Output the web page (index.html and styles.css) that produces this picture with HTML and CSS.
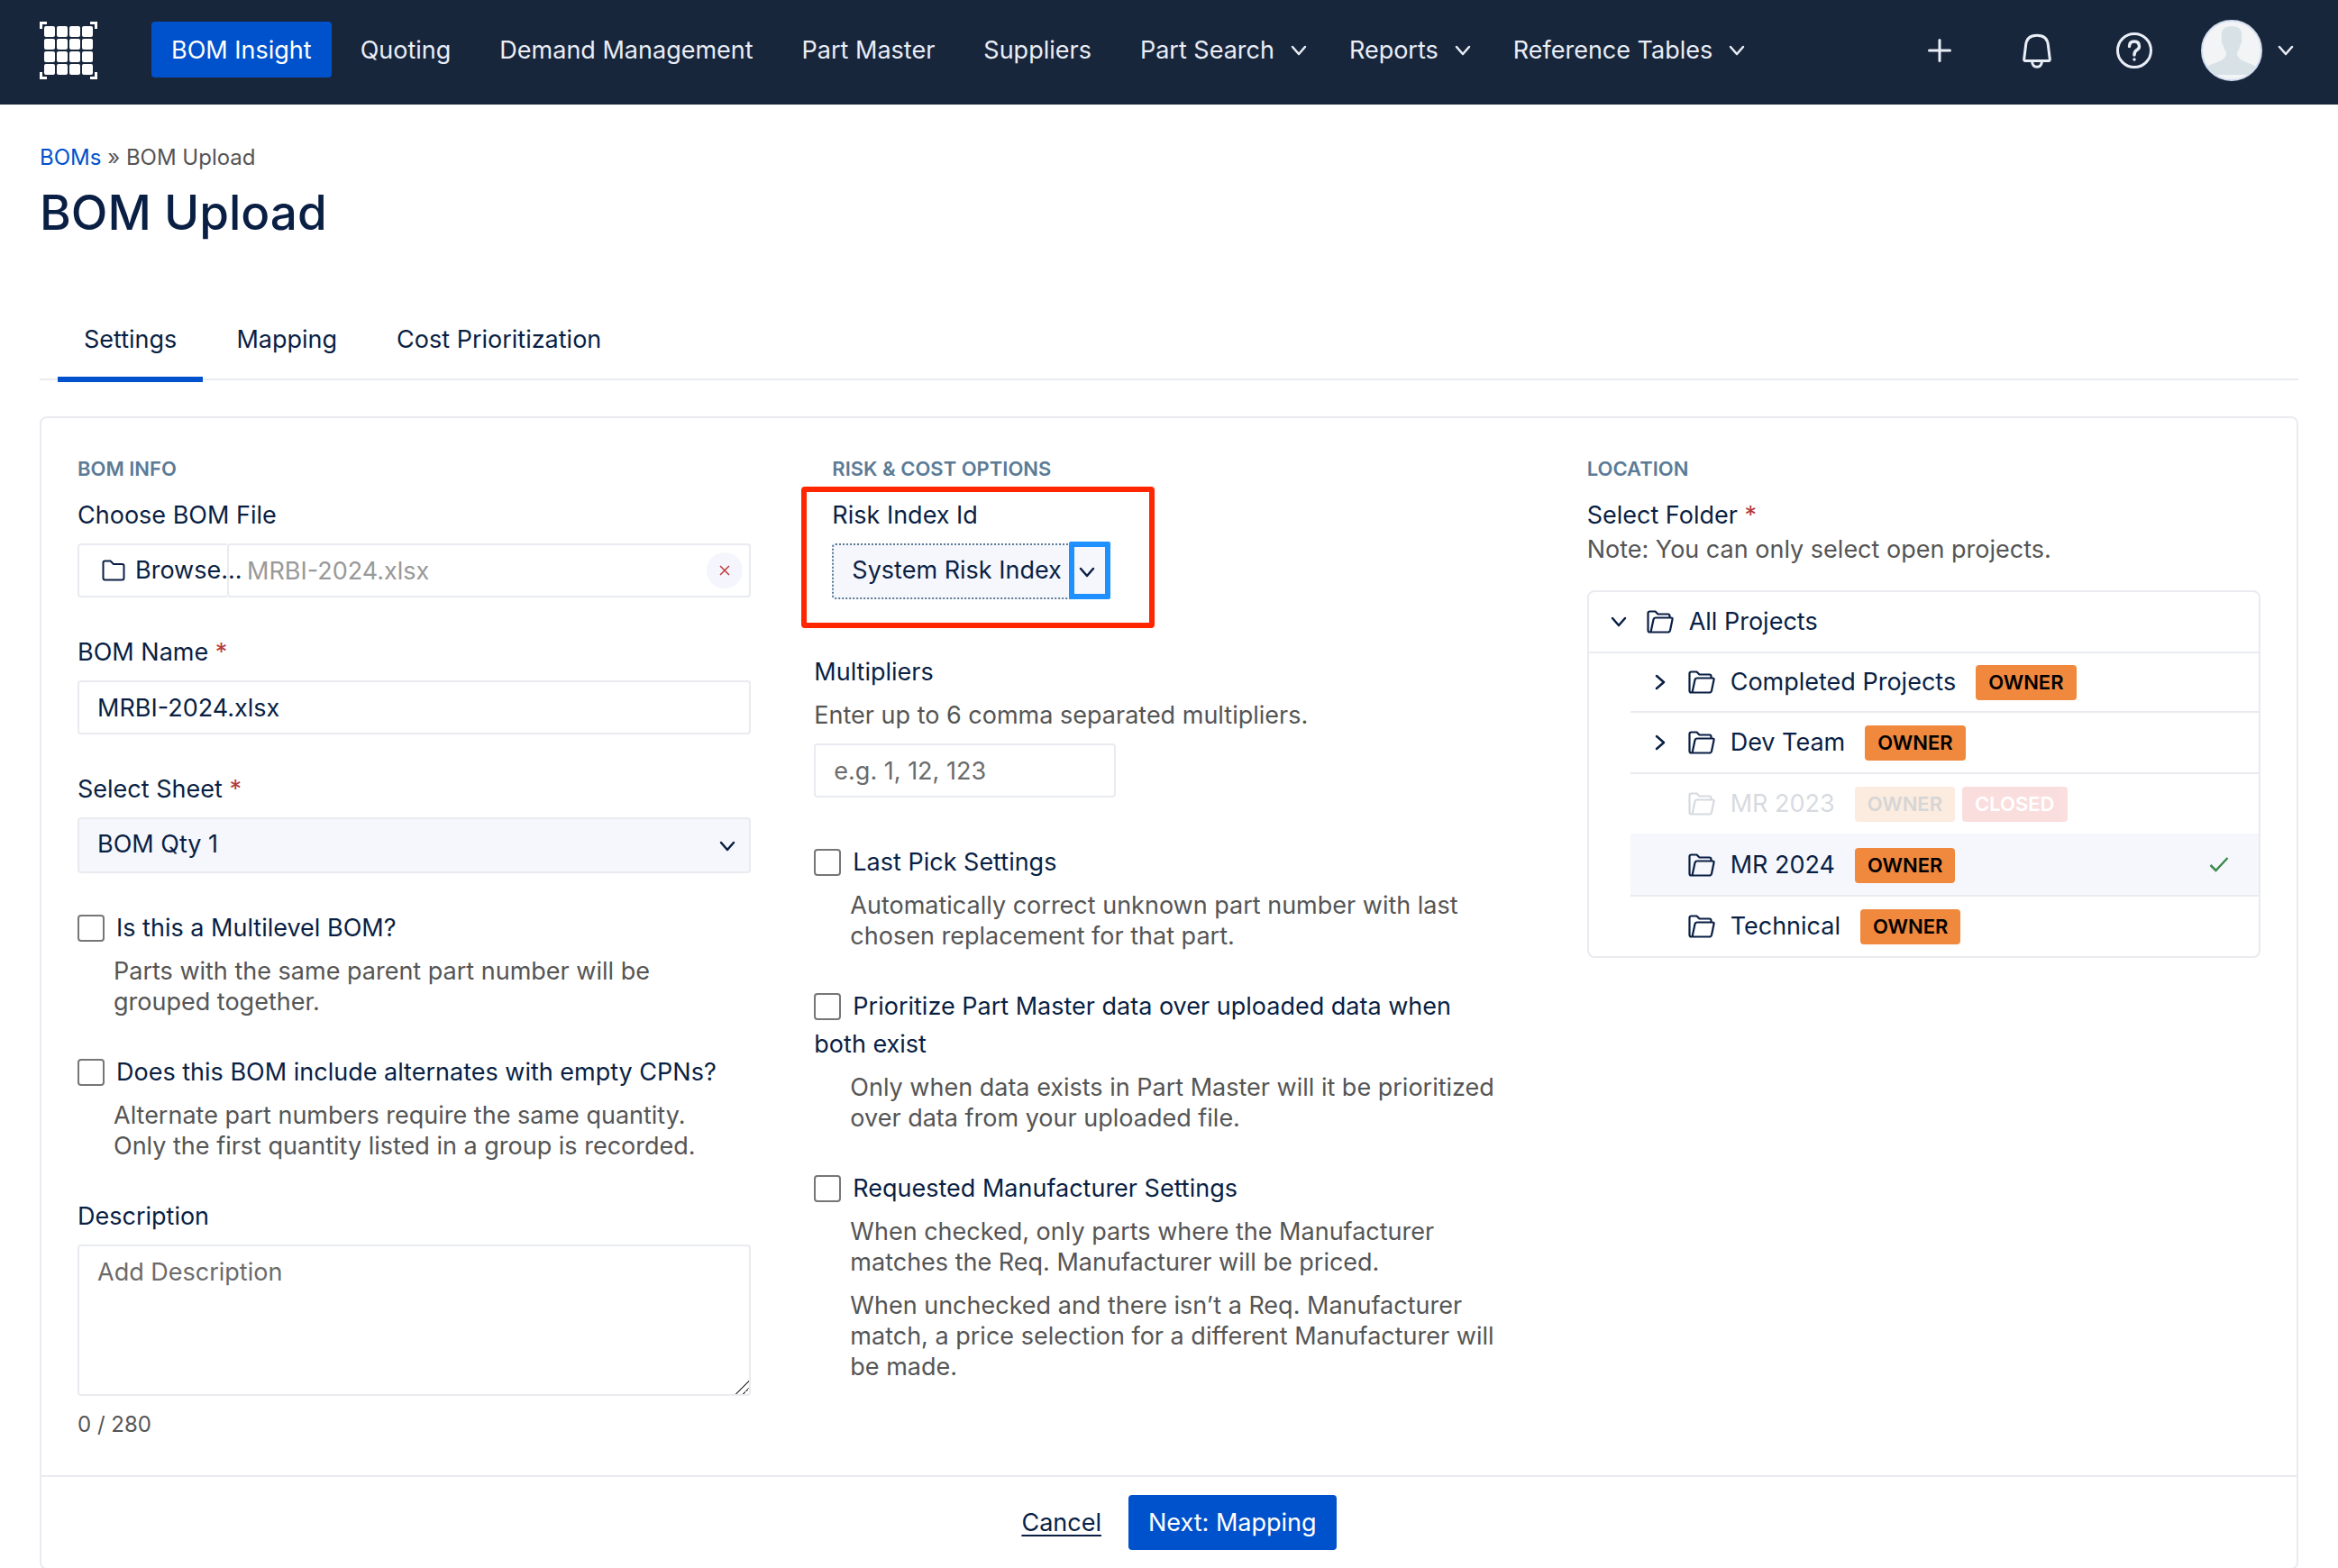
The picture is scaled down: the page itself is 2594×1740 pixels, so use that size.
FILE: index.html
```html
<!DOCTYPE html>
<html lang="en">
<head>
<meta charset="utf-8">
<meta name="viewport" content="width=device-width, initial-scale=1">
<title>BOM Upload</title>
<link rel="stylesheet" href="styles.css">
</head>
<body>

<!-- shared icons -->
<svg class="sprite" aria-hidden="true">
  <symbol id="chevron" viewBox="0 0 18 12"><path d="M2 2l7 8 7-8" fill="none" stroke="currentColor" stroke-width="2.500" stroke-linecap="round" stroke-linejoin="round"/></symbol>
  <symbol id="folder-open" viewBox="0 0 30 26">
    <path d="M4.500 24.500H3.500Q1.500 24.500 1.500 22.500V3.500Q1.500 1.500 3.500 1.500H9.500L12.500 4.500H23.500Q25.500 4.500 25.500 6.500V8.500M4.500 24.500L7.500 10.500Q8 8.500 10 8.500H27Q29 8.500 28.500 10.500L26 22.500Q25.500 24.500 23.500 24.500H4.500" fill="none" stroke="currentColor" stroke-width="2.200" stroke-linejoin="round"/>
  </symbol>
</svg>

<header class="topbar">
  <a class="logo" href="#" aria-label="Home">
    <svg viewBox="0 0 64 64" width="64" height="64">
      <g fill="none" stroke="#fff" stroke-width="3"><path d="M1.500 8V1.500H8M56 1.500H62.500V8M62.500 56V62.500H56M8 62.500H1.500V56"/></g>
      <g fill="#fff">
        <rect x="5" y="5" width="12" height="12" rx="2"/><rect x="19" y="5" width="12" height="12" rx="2"/><rect x="33" y="5" width="12" height="12" rx="2"/><rect x="47" y="5" width="12" height="12" rx="2"/>
        <rect x="5" y="19" width="12" height="12" rx="2"/><rect x="19" y="19" width="12" height="12" rx="2"/><rect x="33" y="19" width="12" height="12" rx="2"/><rect x="47" y="19" width="12" height="12" rx="2"/>
        <rect x="5" y="33" width="12" height="12" rx="2"/><rect x="19" y="33" width="12" height="12" rx="2"/><rect x="33" y="33" width="12" height="12" rx="2"/><rect x="47" y="33" width="12" height="12" rx="2"/>
        <rect x="5" y="47" width="12" height="12" rx="2"/><rect x="19" y="47" width="12" height="12" rx="2"/><rect x="33" y="47" width="12" height="12" rx="2"/><rect x="47" y="47" width="12" height="12" rx="2"/>
      </g>
    </svg>
  </a>
  <nav class="nav">
    <a class="nav-link active" href="#">BOM Insight</a>
    <a class="nav-link" href="#">Quoting</a>
    <a class="nav-link" href="#">Demand Management</a>
    <a class="nav-link" href="#">Part Master</a>
    <a class="nav-link" href="#">Suppliers</a>
    <a class="nav-link has-menu" href="#">Part Search <svg class="chevron"><use href="#chevron"/></svg></a>
    <a class="nav-link has-menu" href="#">Reports <svg class="chevron"><use href="#chevron"/></svg></a>
    <a class="nav-link has-menu" href="#">Reference Tables <svg class="chevron"><use href="#chevron"/></svg></a>
  </nav>
  <div class="tools">
    <button type="button" class="tool" aria-label="Add">
      <svg viewBox="0 0 44 44"><path d="M22 10.500V33.500M10.500 22H33.500" stroke-width="3"/></svg>
    </button>
    <button type="button" class="tool" aria-label="Notifications">
      <svg viewBox="0 0 44 44"><path d="M9.500 17C10 9 15 5.300 22 5.300S34 9 34.500 17L36.300 31.500Q36.500 33.500 35 33.500H9Q7.500 33.500 7.700 31.500ZM16.500 34Q17 40.300 22 40.300T27.500 34" stroke-width="3"/></svg>
    </button>
    <button type="button" class="tool" aria-label="Help">
      <svg viewBox="0 0 44 44"><circle cx="22" cy="22" r="18.500" stroke-width="3"/><path d="M16.500 17.500Q16.500 12 22 12T27.500 17.500Q27.500 20 24.500 21.700Q22 23.500 22 27M22 32V32.100" stroke-width="3.400"/></svg>
    </button>
  </div>
  <button type="button" class="user" aria-label="Account">
    <svg class="avatar" viewBox="0 0 68 68">
      <defs><clipPath id="round"><circle cx="34" cy="34" r="33"/></clipPath></defs>
      <circle cx="34" cy="34" r="33" fill="#f2f4f6"/>
      <path clip-path="url(#round)" fill="#d8e2e6" d="M0 61V56Q8 50 18 47Q28 43 28 38L27.500 35Q25 32 24.500 28Q22 26 23 21Q21 7 34 7T45 21Q46 26 43.500 28Q43 32 40.500 35L40 38Q40 43 50 47Q60 50 68 56V61Z"/>
      <circle cx="34" cy="34" r="33" fill="none" stroke="#d3dff0" stroke-width="2"/>
    </svg>
    <svg class="chevron"><use href="#chevron"/></svg>
  </button>
</header>

<main class="page">
  <p class="breadcrumb"><a href="#">BOMs</a> » BOM Upload</p>
  <h1>BOM Upload</h1>

  <nav class="tabs">
    <a class="tab active" href="#">Settings</a>
    <a class="tab" href="#">Mapping</a>
    <a class="tab" href="#">Cost Prioritization</a>
  </nav>

  <form class="panel">
    <div class="columns">

      <section>
        <h2>BOM INFO</h2>
        <div class="field">
          <label for="bom-file">Choose BOM File</label>
          <div class="file-row">
            <button type="button" class="browse">
              <svg viewBox="0 0 26 24"><path d="M1.500 20V3.500Q1.500 1.500 3.500 1.500H9.500L13 5H22.500Q24.500 5 24.500 7V20.500Q24.500 22.500 22.500 22.500H3.500Q1.500 22.500 1.500 20Z"/></svg>
              Browse...
            </button>
            <input type="text" class="control" id="bom-file" placeholder="MRBI-2024.xlsx" readonly>
            <button type="button" class="clear" aria-label="Remove file">
              <svg viewBox="0 0 12 12"><path d="M1 1l10 10M11 1L1 11"/></svg>
            </button>
          </div>
        </div>
        <div class="field">
          <label for="bom-name">BOM Name <span class="req">*</span></label>
          <input type="text" class="control" id="bom-name" value="MRBI-2024.xlsx">
        </div>
        <div class="field">
          <label for="sheet">Select Sheet <span class="req">*</span></label>
          <div class="select">
            <select id="sheet"><option>BOM Qty 1</option></select>
            <svg class="chevron"><use href="#chevron"/></svg>
          </div>
        </div>
        <div class="field">
          <label for="multilevel"><input type="checkbox" id="multilevel">Is this a Multilevel BOM?</label>
          <p class="help indent">Parts with the same parent part number will be<br>grouped together.</p>
        </div>
        <div class="field">
          <label for="alternates"><input type="checkbox" id="alternates">Does this BOM include alternates with empty CPNs?</label>
          <p class="help indent">Alternate part numbers require the same quantity.<br>Only the first quantity listed in a group is recorded.</p>
        </div>
        <div class="field">
          <label for="description">Description</label>
          <textarea class="control" id="description" placeholder="Add Description"></textarea>
          <p class="counter">0 / 280</p>
        </div>
      </section>

      <section>
        <h2>RISK &amp; COST OPTIONS</h2>
        <div class="field risk">
          <label for="risk">Risk Index Id</label>
          <div class="select">
            <select id="risk"><option>System Risk Index</option></select>
            <svg class="chevron"><use href="#chevron"/></svg>
            <span class="mark-arrow"></span>
          </div>
          <span class="mark-field"></span>
        </div>
        <div class="options">
          <div class="field multipliers">
            <label for="multipliers">Multipliers</label>
            <p class="help">Enter up to 6 comma separated multipliers.</p>
            <input type="text" class="control" id="multipliers" placeholder="e.g. 1, 12, 123">
          </div>
          <div class="field">
            <label for="last-pick"><input type="checkbox" id="last-pick">Last Pick Settings</label>
            <p class="help indent">Automatically correct unknown part number with last chosen replacement for that part.</p>
          </div>
          <div class="field">
            <label for="prioritize"><input type="checkbox" id="prioritize">Prioritize Part Master data over uploaded data when<br>both exist</label>
            <p class="help indent">Only when data exists in Part Master will it be prioritized over data from your uploaded file.</p>
          </div>
          <div class="field">
            <label for="req-mfr"><input type="checkbox" id="req-mfr">Requested Manufacturer Settings</label>
            <p class="help indent">When checked, only parts where the Manufacturer matches the Req. Manufacturer will be priced.</p>
            <p class="help indent more">When unchecked and there isn’t a Req. Manufacturer match, a price selection for a different Manufacturer will be made.</p>
          </div>
        </div>
      </section>

      <section>
        <h2>LOCATION</h2>
        <div class="folder-label">Select Folder <span class="req">*</span></div>
        <p class="note">Note: You can only select open projects.</p>
        <div class="tree">
          <div class="row">
            <svg class="chevron"><use href="#chevron"/></svg>
            <svg class="folder"><use href="#folder-open"/></svg>
            <span>All Projects</span>
          </div>
          <ul>
            <li class="row">
              <svg class="chevron closed"><use href="#chevron"/></svg>
              <svg class="folder"><use href="#folder-open"/></svg>
              <span>Completed Projects</span>
              <span class="badge">OWNER</span>
            </li>
            <li class="row">
              <svg class="chevron closed"><use href="#chevron"/></svg>
              <svg class="folder"><use href="#folder-open"/></svg>
              <span>Dev Team</span>
              <span class="badge">OWNER</span>
            </li>
            <li class="row leaf disabled">
              <svg class="folder"><use href="#folder-open"/></svg>
              <span>MR 2023</span>
              <span class="badge">OWNER</span>
              <span class="badge red">CLOSED</span>
            </li>
            <li class="row leaf selected">
              <svg class="folder"><use href="#folder-open"/></svg>
              <span>MR 2024</span>
              <span class="badge">OWNER</span>
              <svg class="check" viewBox="0 0 22 18"><path d="M1.500 9l6 6L20.500 1"/></svg>
            </li>
            <li class="row leaf">
              <svg class="folder"><use href="#folder-open"/></svg>
              <span>Technical</span>
              <span class="badge">OWNER</span>
            </li>
          </ul>
        </div>
      </section>

    </div>
    <div class="actions">
      <a class="btn cancel" href="#">Cancel</a>
      <button type="button" class="btn primary">Next: Mapping</button>
    </div>
  </form>
</main>

</body>
</html>
```

FILE: styles.css
```css
* {
  box-sizing: border-box;
}

body {
  margin: 0;
  background: #fff;
  color: #0a1f44;
  font: 27px/42px Inter, "Liberation Sans", sans-serif;
}

h1, h2, p, ul {
  margin: 0;
  padding: 0;
}

button, input, select, textarea {
  font: inherit;
  color: inherit;
  margin: 0;
}

button {
  border: 0;
  padding: 0;
  background: none;
}

svg {
  display: block;
  flex: none;
}

.sprite {
  position: absolute;
  width: 0;
  height: 0;
}

.chevron {
  width: 18px;
  height: 12px;
}

/* Top bar */
.topbar {
  display: flex;
  align-items: center;
  height: 116px;
  padding: 0 49px 4px 44px;
  background: #18263c;
  color: #e9edf5;
}

.nav {
  display: flex;
  gap: 10px;
  margin-left: 60px;
}

.nav-link {
  display: flex;
  align-items: center;
  height: 62px;
  padding: 2px 22px 0;
  margin-bottom: 2px;
  border-radius: 4px;
  color: #e9edf5;
  text-decoration: none;
  white-space: nowrap;
}

.nav-link.active {
  background: #0052cc;
  color: #fff;
}

.nav-link.has-menu {
  gap: 18px;
  padding-right: 15px;
}

.tools {
  display: flex;
  gap: 64px;
  margin-left: auto;
}

.tool svg {
  width: 44px;
  height: 44px;
  fill: none;
  stroke: #e9edf5;
  stroke-linecap: round;
  stroke-linejoin: round;
}

.user {
  display: flex;
  align-items: center;
  gap: 17px;
  margin-left: 52px;
}

.avatar {
  width: 68px;
  height: 68px;
}

/* Page head */
.page {
  padding: 43px 44px 0;
}

.breadcrumb {
  font-size: 24px;
  line-height: 32px;
  color: #555;
}

.breadcrumb a {
  color: #0052cc;
  text-decoration: none;
}

h1 {
  margin-top: 13px;
  font-size: 53px;
  line-height: 64px;
  font-weight: 500;
}

.tabs {
  display: flex;
  gap: 8px;
  height: 154px;
  align-items: flex-end;
  padding-left: 20px;
  border-bottom: 2px solid #e9ebf0;
}

.tab {
  padding: 0 29px 20px;
  margin-bottom: -4px;
  border-bottom: 6px solid transparent;
  color: #0a1f44;
  text-decoration: none;
}

.tab.active {
  border-bottom-color: #0052cc;
}

/* Panel */
.panel {
  margin-top: 40px;
  border: 2px solid #e9ebf0;
  border-radius: 8px;
}

.columns {
  display: grid;
  grid-template-columns: repeat(3, minmax(0, 1fr));
  column-gap: 90px;
  padding: 40px;
}

h2 {
  margin-bottom: 15px;
  font-size: 22px;
  line-height: 32px;
  font-weight: 600;
  color: #5b7b96;
}

.field {
  margin-bottom: 40px;
}

.field:last-child {
  margin-bottom: 0;
}

.field label {
  display: block;
}

.req {
  color: #b53a3a;
}

.control {
  display: block;
  width: 100%;
  height: 60px;
  margin-top: 10px;
  padding: 0 20px;
  border: 2px solid #e9ebf0;
  border-radius: 4px;
  background: #fff;
  outline: none;
}

.control::placeholder {
  color: #6b6b6b;
  opacity: 1;
}

textarea.control {
  height: 168px;
  padding: 8px 20px;
}

textarea.control::-webkit-resizer {
  background: linear-gradient(135deg, transparent 48%, #555 48%, #555 54%, transparent 54%, transparent 74%, #555 74%, #555 80%, transparent 80%);
}

input[type="checkbox"] {
  appearance: none;
  width: 30px;
  height: 30px;
  margin-right: 13px;
  border: 2px solid #767676;
  border-radius: 4px;
  background: #fff;
  vertical-align: -6px;
}

.help {
  margin-top: 10px;
  line-height: 34px;
  color: #555;
}

.help.indent {
  padding-left: 40px;
}

.help.more {
  margin-top: 14px;
}

.counter {
  margin-top: 16px;
  font-size: 24px;
  line-height: 32px;
  color: #555;
}

/* File picker */
.file-row {
  position: relative;
  display: flex;
  height: 60px;
  margin-top: 10px;
}

.browse {
  position: relative;
  z-index: 1;
  display: flex;
  flex: none;
  align-items: center;
  gap: 11px;
  width: 166px;
  padding-left: 25px;
  border: 2px solid #e9ebf0;
  border-right: 0;
  border-radius: 4px 0 0 4px;
  white-space: nowrap;
}

.browse svg {
  width: 26px;
  height: 24px;
  fill: none;
  stroke: currentColor;
  stroke-width: 2;
}

.file-row .control {
  flex: 1;
  margin: 0;
}

.file-row .control::placeholder {
  color: #999;
}

.clear {
  position: absolute;
  top: 10px;
  right: 9px;
  display: flex;
  align-items: center;
  justify-content: center;
  width: 40px;
  height: 40px;
  border-radius: 50%;
  background: #f5f6fd;
}

.clear svg {
  width: 12px;
  height: 12px;
  stroke: #c0393b;
  stroke-width: 1.5;
}

/* Drop-downs */
.select {
  position: relative;
  margin-top: 10px;
}

.select select {
  display: block;
  appearance: none;
  width: 100%;
  height: 62px;
  padding: 0 20px 3px;
  border: 2px solid #e9ebf0;
  border-radius: 4px;
  background: #f6f7fd;
}

.select .chevron {
  position: absolute;
  top: 26px;
  right: 17px;
}

.risk {
  position: relative;
  margin-bottom: 60px;
}

.risk .select {
  width: 309px;
}

.risk select {
  border: 2px dotted #5b7b96;
}

/* Highlight frames */
.mark-arrow {
  position: absolute;
  top: -2px;
  right: 0;
  width: 46px;
  height: 64px;
  border: 6px solid #1e90ff;
  border-radius: 2px;
}

.mark-field {
  position: absolute;
  top: -11px;
  left: -34px;
  width: 392px;
  height: 157px;
  border: 6px solid #ff2600;
  border-radius: 4px;
}

.options {
  margin-left: -20px;
}

.multipliers {
  margin-bottom: 51px;
}

.multipliers .control {
  width: 335px;
  margin-top: 14px;
}

/* Folder tree */
.note {
  line-height: 34px;
  color: #555;
}

.tree {
  margin-top: 28px;
  border: 2px solid #e9ebf0;
  border-radius: 8px;
  overflow: hidden;
}

.tree ul {
  margin-left: 46px;
  list-style: none;
}

.row {
  display: flex;
  align-items: center;
  height: 68px;
  padding-left: 24px;
  border-bottom: 2px solid #e9ebf0;
}

.tree li:first-child {
  height: 66px;
}

.tree li:last-child {
  height: 66px;
  border-bottom: 0;
}

.row.leaf {
  padding-left: 64px;
}

.row .folder {
  width: 30px;
  height: 26px;
  margin-right: 17px;
}

.row .chevron {
  margin-right: 22px;
}

.chevron.closed {
  transform: rotate(-90deg);
}

.badge {
  margin-left: 22px;
  padding: 0 14px;
  border-radius: 4px;
  background: #f0883e;
  color: #000;
  font-size: 22px;
  line-height: 39px;
  font-weight: 600;
}

.badge.red {
  margin-left: 8px;
  background: #e53535;
  color: #fff;
}

.row.disabled {
  border-bottom-color: #f6f7fd;
}

.row.disabled > * {
  opacity: 0.16;
}

.row.selected {
  background: #f6f7fd;
}

.check {
  width: 22px;
  height: 18px;
  margin-left: auto;
  margin-right: 33px;
  fill: none;
  stroke: #3c8a4b;
  stroke-width: 2.5;
}

/* Footer */
.actions {
  display: flex;
  justify-content: center;
  gap: 8px;
  padding: 20px;
  border-top: 2px solid #e9ebf0;
}

.btn {
  height: 61px;
  padding: 0 22px;
  border-radius: 4px;
  line-height: 61px;
}

.btn.cancel {
  color: #0a1f44;
  text-underline-offset: 4px;
}

.btn.primary {
  background: #0052cc;
  color: #fff;
}
```
